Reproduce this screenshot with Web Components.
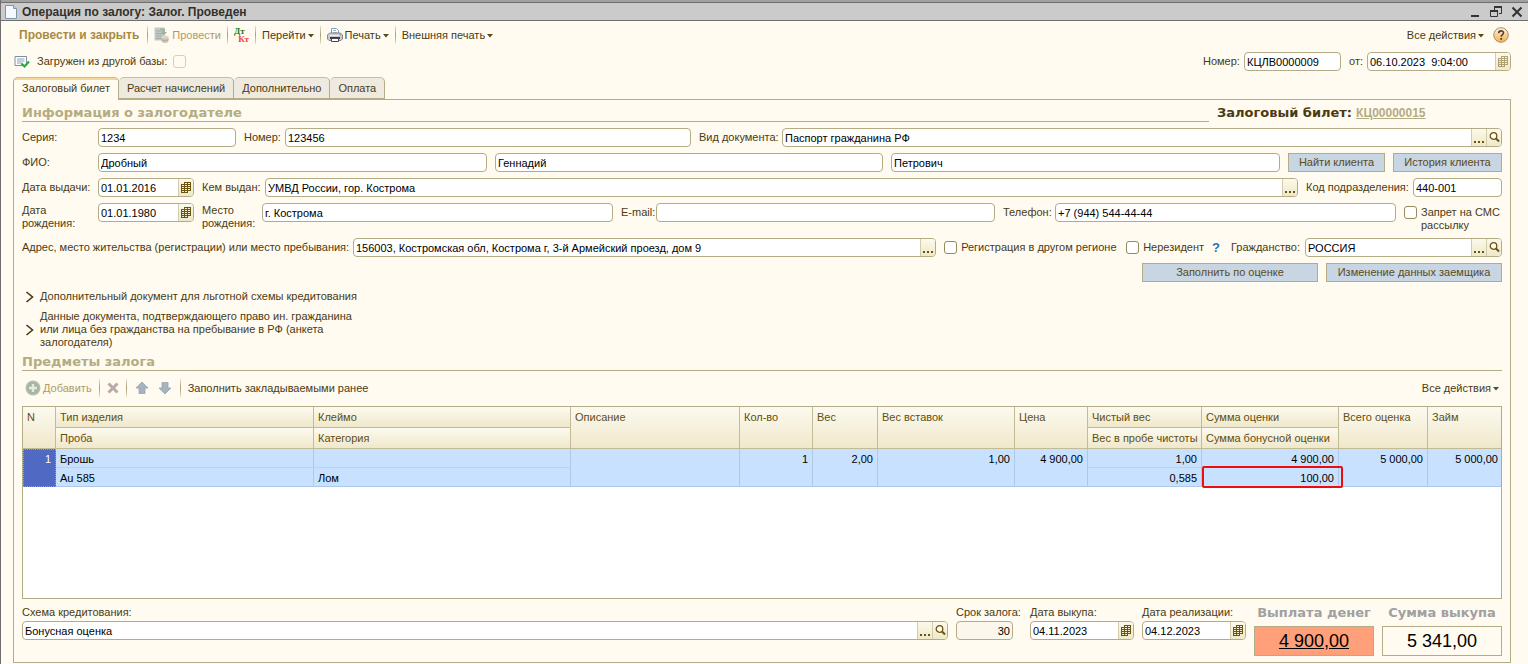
<!DOCTYPE html>
<html lang="ru">
<head>
<meta charset="utf-8">
<title>Операция по залогу</title>
<style>
  html, body { margin: 0; }
  body {
    --line: #b3ac86;
    --ink: #4a3a12;
    --bg: #fffbf0;
    --head: "DejaVu Sans", sans-serif;
    font: 11px/13px "Liberation Sans", Arial, sans-serif;
    color: var(--ink);
    background: var(--bg);
  }
</style>
</head>
<body>
<pawn-operation></pawn-operation>

<script>
const ICONS = {
  doc: `<svg width="14" height="16" viewBox="0 0 14 16"><path d="M1.5 1.5h8l3 3v10h-11z" fill="#f4f9ff" stroke="#7d95ad"/><path d="M9.500 1.500v3h3" fill="#cfe0f0" stroke="#7d95ad"/></svg>`,
  min: `<svg width="12" height="12"><path d="M2 10h8" stroke="#333" stroke-width="2"/></svg>`,
  restore: `<svg width="12" height="12"><path d="M4.500 4V1.500h7v6H9" fill="none" stroke="#333"/><path d="M4 1h8" stroke="#333" stroke-width="2"/><path d="M.5 4.500h7v6h-7z" fill="none" stroke="#333"/><path d="M0 5h8" stroke="#333" stroke-width="2"/></svg>`,
  close: `<svg width="12" height="12"><path d="M1.500 1.500l9 9M10.500 1.500l-9 9" stroke="#333" stroke-width="2"/></svg>`,
  post: `<svg width="16" height="16"><path d="M.5.500h10v13H.5z" fill="#c3c8c4"/><path d="M2 4h7M2 6.500h7M2 9h6M2 11.500h5" stroke="#a3aaa8"/><path d="M6 1.500h5V5h2l-3 3.500L7 5h2V3H6z" fill="#9fb5a3"/><path d="M7.500 10v4c0 2.500 7 2.500 7 0v-4z" fill="#c9c5b4"/><ellipse cx="11" cy="10" rx="3.500" ry="1.500" fill="#dcd8c8"/><path d="M7.500 12c0 2 7 2 7 0" stroke="#b2ad99" fill="none"/></svg>`,
  print: `<svg width="16" height="16"><path d="M4.500 7V1.500h5l2 2V7" fill="#fff" stroke="#7ea0c0"/><path d="M6 3.500h3M6 5.500h4" stroke="#9cb8d0"/><path d="M.5 8l2-2h11l2 2v4l-1.500 1.500h-12L.5 12z" fill="#c9cbd2" stroke="#8b8790"/><path d="M2.500 8.500h11" stroke="#f1f1f4"/><path d="M3 10h10v2H3z" fill="#3d3a40"/><path d="M4.500 11.500h7v3h-7z" fill="#fff" stroke="#4a464c"/><path d="M12.500 8h1.500" stroke="#e08a3c" stroke-width="1.500"/></svg>`,
  help: `<svg width="16" height="16"><defs><linearGradient id="g" x2="0" y2="1"><stop offset="0" stop-color="#fdf3df"/><stop offset="1" stop-color="#f5b04e"/></linearGradient></defs><circle cx="8" cy="8" r="7.300" fill="url(#g)" stroke="#a98d70"/><path d="M5.700 6.300c0-3.200 4.800-3.200 4.800-.300C10.500 7.600 8.200 7.600 8.200 9.800" fill="none" stroke="#5a4034" stroke-width="1.600"/><path d="M7.300 11h1.800v1.800H7.300z" fill="#5a4034"/></svg>`,
  posted: `<svg width="16" height="14"><path d="M1 1.500h11.500v9H1z" fill="#fff" stroke="#7b8fa5"/><path d="M3 4h7.500M3 6h7.500M3 8h5" stroke="#8c9db0"/><path d="M7.500 8.500l3 3 4.500-5" fill="none" stroke="#22b03c" stroke-width="2.200"/></svg>`,
  cal: `<svg width="10" height="11"><path d="M.5 2.500v8M3.500 .5v10M6.500 .5v10M9.500 .5v8M3 .5h7M0 2.500h10M0 4.500h10M0 6.500h10M0 8.500h10M0 10.500h7" fill="none" stroke="#6b5310"/></svg>`,
  dots: `<svg width="11" height="11"><path d="M0 9h2v2H0zM4 9h2v2H4zM8 9h2v2H8z" fill="#6b5310"/></svg>`,
  search: `<svg width="11" height="11"><circle cx="4.500" cy="4" r="3.300" fill="#fffdf0" stroke="#6b5310" stroke-width="1.300"/><path d="M7 6.500l3 3" stroke="#6b5310" stroke-width="2"/></svg>`,
  add: `<svg width="16" height="16"><circle cx="8" cy="8" r="7.500" fill="#b3c0ae"/><circle cx="8" cy="8" r="6" fill="#a6b5a3"/><path d="M8 4v8M4 8h8" stroke="#e4eadf" stroke-width="2.400"/></svg>`,
  del: `<svg width="12" height="12"><path d="M1.500 1.500l9 9M10.500 1.500l-9 9" stroke="#bba9a5" stroke-width="3"/></svg>`,
  up: `<svg width="16" height="14"><path d="M8 1l6 6H11v5.500H5V7H2z" fill="#a5b4bd" stroke="#94a5b0" stroke-width=".8"/></svg>`,
  down: `<svg width="16" height="14"><path d="M8 13L2 7h3V1.500h6V7h3z" fill="#a5b4bd" stroke="#94a5b0" stroke-width=".8"/></svg>`,
  chevron: `<svg width="10" height="12"><path d="M1.500 1l6 5-6 5" fill="none" stroke="#4a3a12" stroke-width="1.600"/></svg>`,
  caret: `<svg width="6" height="4"><path d="M0 0h6L3 3.500z" fill="#5a4a1a"/></svg>`
};

const BASE = `
  :host { box-sizing: border-box; display: block; }
  *, *::before, *::after { box-sizing: border-box; }
  button { font: inherit; color: inherit; background: none; border: 0; margin: 0; padding: 0; }
  input { font: inherit; margin: 0; }
  svg { display: block; flex: none; }
`;

function component(name, css, render) {
  customElements.define(name, class extends HTMLElement {
    constructor() {
      super();
      this.attachShadow({ mode: "open" });
    }
    connectedCallback() {
      const t = document.createElement("template");
      t.innerHTML = `<style>${BASE}${css}</style>${render(this)}`;
      this.shadowRoot.replaceChildren(t.content.cloneNode(true));
    }
  });
}
const attr = (el, n) => el.getAttribute(n) || "";

component("title-bar", `
  :host { border-top: 2px solid #a0a0a0; }
  header { display: flex; align-items: center; height: 19px; padding: 0 5px 0 3px; gap: 4px;
    background: #cbcbcb; border: solid #6f6f6f; border-width: 1px 0; }
  h1 { flex: 1; margin: 0; font-size: 12px; line-height: 14px; color: #33302a; }
  nav { display: flex; gap: 9px; }
`, () => `<header>${ICONS.doc}<h1><slot></slot></h1>
  <nav><button aria-label="Свернуть">${ICONS.min}</button><button aria-label="Восстановить">${ICONS.restore}</button><button aria-label="Закрыть">${ICONS.close}</button></nav></header>`);

component("tool-button", `
  :host { flex: none; }
  button { display: flex; align-items: center; gap: 2px; height: 18px; white-space: nowrap; }
  :host([strong]) button { font-size: 12px; font-weight: bold; color: #a98a42; padding-right: 2px; }
  :host([off]) button { color: #b09a62; }
  .caret { padding: 2px 0 0; }
`, el => `<button ${el.hasAttribute("off") ? "disabled" : ""} ${attr(el, "hint") ? `aria-label="${attr(el, "hint")}"` : ""}>${ICONS[attr(el, "icon")] || ""}<slot></slot>${el.hasAttribute("menu") ? `<span class="caret">${ICONS.caret}</span>` : ""}</button>`);

component("tool-separator", `
  :host { flex: none; width: 1px; height: 18px; background: linear-gradient(#e8e2c8, #a79e72, #e8e2c8); }
`, () => ``);

component("debit-credit", `
  :host { flex: none; }
  button { display: grid; width: 15px; font: bold 9px/8px "Liberation Serif", serif; }
  .d { color: #1f7a1f; text-align: left; }
  .c { color: #f04040; text-align: right; }
`, () => `<button><span class="d">Дт</span><span class="c">Кт</span></button>`);

component("form-field", `
  :host { display: flex; min-width: 0; }
  label { flex: none; width: var(--label, auto); padding-top: 3px; white-space: nowrap; }
  :host([wrap]) label { padding-top: 1px; white-space: normal; }
  :host([stacked]) { flex-direction: column; }
  :host([stacked]) label { padding: 0 0 2px; }
  .box { display: flex; flex: 1; min-width: 0; height: 19px; background: #fff;
    border: 1px solid var(--line); border-radius: 4px; overflow: hidden; }
  :host([stacked]) .box { flex: none; width: var(--box, auto); }
  input { flex: 1; min-width: 0; width: 0; height: 17px; padding: 0 2px; border: 0; outline: 0; background: none; color: #000; }
  :host([readonly]) .box { background: #fbf7ec; }
  :host([readonly]) input { text-align: right; }
  .box button { display: grid; place-items: center; width: 15px; height: 17px;
    border-left: 1px solid #d2ccab; background: linear-gradient(#fbf9ea, #eee9c9); }
  :host([dim]) .box button svg { opacity: .5; }
`, el => {
  const names = { cal: "Выбрать дату", dots: "Выбрать", search: "Открыть" };
  const btns = attr(el, "tools").split(" ").filter(Boolean)
    .map(k => `<button aria-label="${names[k]}">${ICONS[k]}</button>`).join("");
  const label = attr(el, "label");
  return `${label ? `<label for="f">${label}</label>` : ""}
    <div class="box"><input id="f" type="text" value="${attr(el, "value")}" ${label ? "" : `aria-label="${attr(el, "hint")}"`} ${el.hasAttribute("readonly") ? "readonly" : ""}>${btns}</div>`;
});

component("check-field", `
  :host { flex: none; }
  label { display: flex; gap: 4px; padding-top: 3px; }
  input { appearance: none; flex: none; width: 13px; height: 13px; background: #fff;
    border: 1px solid #948b60; border-radius: 3px; }
  input:disabled { background: var(--bg); border-color: #d8d0b2; }
  :host([before]) label { flex-direction: row-reverse; padding: 0; gap: 6px; }
`, el => `<label><input type="checkbox" ${el.hasAttribute("off") ? "disabled" : ""}><span><slot></slot></span></label>`);

component("push-button", `
  :host { flex: none; }
  button { width: 100%; height: 19px; text-align: center; white-space: nowrap; color: #5a4a1a;
    background: #c8d5e2; border: 1px solid var(--line); }
`, () => `<button><slot></slot></button>`);

component("tab-strip", `
  :host { display: flex; position: relative; z-index: 1; margin-bottom: -1px; }
  button { height: 22px; padding: 0 8px; border: 1px solid var(--line); border-left-width: 0;
    border-radius: 5px 5px 0 0; background: #efeae0; border-top-color: #c5bf9f; }
  button[aria-selected=true] { height: 23px; padding-bottom: 2px; border-left-width: 1px;
    background: linear-gradient(#f7d795 2px, var(--bg) 2px); border-bottom: 0; }
`, el => attr(el, "tabs").split("|").map((t, i) => `<button role="tab" aria-selected="${i === 0}">${t}</button>`).join(""));

component("group-heading", `
  :host { flex: 1; }
  h2 { margin: 0; height: 16px; font: bold 13px/14px var(--head); color: #b5ab80;
    border-bottom: 1px solid var(--line); }
`, () => `<h2><slot></slot></h2>`);

component("expand-row", `
  button { display: flex; align-items: center; gap: 5px; text-align: left; padding-left: 3px; }
  span { width: 320px; }
`, () => `<button aria-expanded="false">${ICONS.chevron}<span><slot></slot></span></button>`);

component("items-table", `
  :host { background: #fff; border: 1px solid var(--line); overflow: hidden; }
  table { width: 100%; table-layout: fixed; border-collapse: separate; border-spacing: 0; }
  th, td { padding: 0 4px; vertical-align: top; white-space: nowrap; text-align: left; font-weight: normal; }
  th { height: 21px; line-height: 20px; color: #5f4e12; background: linear-gradient(#fcfaf0, #f0e8cb);
    border: solid #c3bb95; border-width: 0 1px 1px 0; }
  td { height: 19px; padding-top: 2px; line-height: 16px; color: #000; background: #c8e1ff; border-right: 1px solid #adc8e8; border-bottom: 1px solid #adc8e8; }
  td.top { border-bottom-color: #b9d4f3; }
  tr > .end { border-right: 0; }
  td.num { text-align: right; }
  td.idx { text-align: right; color: #fff; background: #5069c2; border: 1px dotted #b59a5a; padding-top: 1px; }
  td.mark { position: relative; overflow: visible; }
  td.mark::after { content: ""; position: absolute; inset: -2px -5px -2px 0; border: 2px solid #f00c0c; border-radius: 2px; }
`, () => `<table>
  <colgroup>${[33,258,257,169,73,65,137,73,114,137,89,74].map(w => `<col style="width:${w}px">`).join("")}</colgroup>
  <thead><tr><th rowspan="2">N</th><th>Тип изделия</th><th>Клеймо</th><th rowspan="2">Описание</th><th rowspan="2">Кол-во</th><th rowspan="2">Вес</th><th rowspan="2">Вес вставок</th><th rowspan="2">Цена</th><th>Чистый вес</th><th>Сумма оценки</th><th rowspan="2">Всего оценка</th><th rowspan="2" class="end">Займ</th></tr>
  <tr><th>Проба</th><th>Категория</th><th>Вес в пробе чистоты</th><th>Сумма бонусной оценки</th></tr></thead>
  <tbody><tr><td rowspan="2" class="idx">1</td><td class="top">Брошь</td><td class="top"></td><td rowspan="2"></td><td rowspan="2" class="num">1</td><td rowspan="2" class="num">2,00</td><td rowspan="2" class="num">1,00</td><td rowspan="2" class="num">4 900,00</td><td class="num top">1,00</td><td class="num top">4 900,00</td><td rowspan="2" class="num">5 000,00</td><td rowspan="2" class="num end">5 000,00</td></tr>
  <tr><td>Au 585</td><td>Лом</td><td class="num">0,585</td><td class="num mark">100,00</td></tr></tbody>
</table>`);

component("sum-box", `
  :host { flex: none; width: 120px; text-align: center; }
  .cap { font: bold 13px/14px var(--head); color: #a0a0a0; white-space: nowrap; margin-bottom: 6px; }
  output { display: block; font-size: 18px; line-height: 28px; color: #000; border: 1px solid var(--line); }
  :host([due]) output { background: #ffa07a; text-decoration: underline; }
`, el => `<div class="cap" id="c">${attr(el, "label")}</div><output aria-labelledby="c"><slot></slot></output>`);

component("pawn-operation", `
  :host { display: flex; flex-direction: column; min-height: 100vh; border: solid #6f6f6f; border-width: 0 0 0 1px; }
  .bar { display: flex; align-items: center; gap: 6px; }
  .main { padding: 5px 19px 0 18px; }
  .main tool-button[icon=help] { padding-left: 3px; }
  .grow { flex: 1; }
  .doc { display: flex; align-items: center; gap: 8px; padding: 8px 17px 6px 13px; }
  .doc svg { margin-right: -1px; }
  .panel { flex: 1; display: flex; flex-direction: column; margin: 0 17px 1px 12px; padding: 6px 8px; border: 1px solid var(--line); }
  tab-strip { margin-left: 12px; }
  .rows { display: grid; gap: 6px; }
  .row { display: flex; gap: 8px; align-items: flex-start; }
  .head { display: flex; gap: 8px; align-items: flex-start; margin-bottom: 6px; }
  .ticket { width: 285px; font: bold 13px/14px var(--head); display: flex; gap: 4px; white-space: nowrap; }
  .ticket a { font: bold 12px/14px "Liberation Sans", sans-serif; color: #b5ab80; }
  .right { justify-content: flex-end; }
  .expand { display: grid; gap: 7px; padding: 8px 0 6px; }
  .list { gap: 7px; padding: 8px 3px 9px; }
  items-table { flex: 1; min-height: 120px; }
  .foot { display: flex; gap: 8px; align-items: flex-start; padding-top: 7px; }
  .q { color: #1f74b8; font-size: 13px; font-weight: bold; margin: 3px 3px 0 0; }
`, () => `
  <title-bar>Операция по залогу: Залог. Проведен</title-bar>
  <div class="bar main">
    <tool-button strong>Провести и закрыть</tool-button><tool-separator></tool-separator>
    <tool-button off icon="post">Провести</tool-button><tool-separator></tool-separator>
    <debit-credit></debit-credit><tool-separator></tool-separator>
    <tool-button menu>Перейти</tool-button><tool-separator></tool-separator>
    <tool-button menu icon="print">Печать</tool-button><tool-separator></tool-separator>
    <tool-button menu>Внешняя печать</tool-button>
    <span class="grow"></span>
    <tool-button menu>Все действия</tool-button>
    <tool-button icon="help" hint="Справка"></tool-button>
  </div>
  <div class="doc">
    ${ICONS.posted}
    <check-field before off>Загружен из другой базы:</check-field>
    <span class="grow"></span>
    <form-field label="Номер:" value="КЦЛВ0000009" style="width:138px;--label:41px"></form-field>
    <form-field label="от:" value="06.10.2023  9:04:00" tools="cal" dim style="width:162px;--label:18px"></form-field>
  </div>
  <tab-strip tabs="Залоговый билет|Расчет начислений|Дополнительно|Оплата"></tab-strip>
  <div class="panel">
    <div class="head">
      <group-heading>Информация о залогодателе</group-heading>
      <div class="ticket"><span>Залоговый билет:</span><a href="#ticket">КЦ00000015</a></div>
    </div>
    <div class="rows">
      <div class="row">
        <form-field label="Серия:" value="1234" style="width:214px;--label:76px"></form-field>
        <form-field label="Номер:" value="123456" style="flex:447;--label:41px"></form-field>
        <form-field label="Вид документа:" value="Паспорт гражданина РФ" tools="dots search" style="flex:803;--label:83px"></form-field>
      </div>
      <div class="row">
        <form-field label="ФИО:" value="Дробный" style="flex:465;--label:76px"></form-field>
        <form-field hint="Имя" value="Геннадий" style="flex:388"></form-field>
        <form-field hint="Отчество" value="Петрович" style="flex:389"></form-field>
        <push-button style="width:97px">Найти клиента</push-button>
        <push-button style="width:109px">История клиента</push-button>
      </div>
      <div class="row">
        <form-field label="Дата выдачи:" value="01.01.2016" tools="cal" style="width:172px;--label:76px"></form-field>
        <form-field label="Кем выдан:" value="УМВД России, гор. Кострома" tools="dots" style="flex:1;--label:63px"></form-field>
        <form-field label="Код подразделения:" value="440-001" style="width:196px;--label:107px"></form-field>
      </div>
      <div class="row">
        <form-field wrap label="Дата рождения:" value="01.01.1980" tools="cal" style="width:172px;--label:76px"></form-field>
        <form-field wrap label="Место рождения:" value="г. Кострома" style="flex:411;--label:60px"></form-field>
        <form-field label="E-mail:" value="" style="flex:374;--label:35px"></form-field>
        <form-field label="Телефон:" value="+7 (944) 544-44-44" style="flex:393;--label:52px"></form-field>
        <check-field style="width:98px">Запрет на СМС рассылку</check-field>
      </div>
      <div class="row">
        <form-field label="Адрес, место жительства (регистрации) или место пребывания:" value="156003, Костромская обл, Кострома г, 3-й Армейский проезд, дом 9" tools="dots" style="flex:1;--label:331px"></form-field>
        <check-field style="width:174px">Регистрация в другом регионе</check-field>
        <check-field>Нерезидент</check-field>
        <button class="q" aria-label="Подсказка">?</button>
        <form-field label="Гражданство:" value="РОССИЯ" tools="dots search" style="width:271px;--label:74px"></form-field>
      </div>
      <div class="row right">
        <push-button style="width:176px">Заполнить по оценке</push-button>
        <push-button style="width:176px">Изменение данных заемщика</push-button>
      </div>
    </div>
    <div class="expand">
      <expand-row>Дополнительный документ для льготной схемы кредитования</expand-row>
      <expand-row>Данные документа, подтверждающего право ин. гражданина или лица без гражданства на пребывание в РФ (анкета залогодателя)</expand-row>
    </div>
    <div><group-heading>Предметы залога</group-heading></div>
    <div class="bar list">
      <tool-button off icon="add">Добавить</tool-button><tool-separator></tool-separator>
      <tool-button off icon="del" hint="Удалить"></tool-button><tool-separator></tool-separator>
      <tool-button off icon="up" hint="Вверх"></tool-button>
      <tool-button off icon="down" hint="Вниз"></tool-button><tool-separator></tool-separator>
      <tool-button>Заполнить закладываемыми ранее</tool-button>
      <span class="grow"></span>
      <tool-button menu>Все действия</tool-button>
    </div>
    <items-table></items-table>
    <div class="foot">
      <form-field stacked label="Схема кредитования:" value="Бонусная оценка" tools="dots search" style="flex:1"></form-field>
      <form-field stacked readonly label="Срок залога:" value="30" style="width:66px;--box:57px"></form-field>
      <form-field stacked label="Дата выкупа:" value="04.11.2023" tools="cal" style="width:104px"></form-field>
      <form-field stacked label="Дата реализации:" value="04.12.2023" tools="cal" style="width:104px"></form-field>
      <sum-box due label="Выплата денег">4 900,00</sum-box>
      <sum-box label="Сумма выкупа">5 341,00</sum-box>
    </div>
  </div>`);
</script>
</body>
</html>
